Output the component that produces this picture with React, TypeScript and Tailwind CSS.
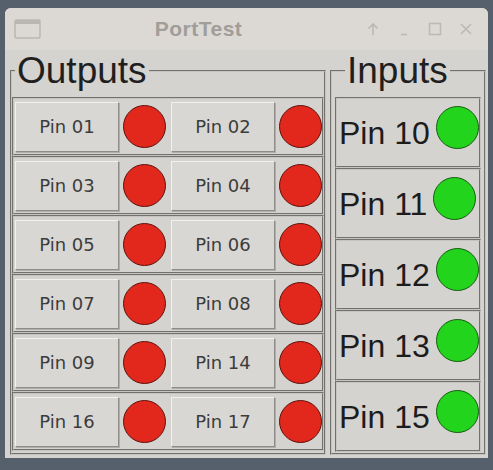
const outputRows = [
  ["01", "02"],
  ["03", "04"],
  ["05", "06"],
  ["07", "08"],
  ["09", "14"],
  ["16", "17"],
];

const inputPins = ["10", "11", "12", "13", "15"];

const Led = ({ on }: { on: boolean }) => (
  <div
    className={
      on
        ? "w-[43px] h-[43px] shrink-0 rounded-full bg-[#22d41c] border border-[#155c12]"
        : "w-[43px] h-[43px] shrink-0 rounded-full bg-[#e2271c] border border-[#5e120c]"
    }
  />
);

const PinButton = ({ label }: { label: string }) => (
  <button
    type="button"
    className="w-[104px] h-[50px] shrink-0 bg-[#d9d7d3] border border-t-[#f3f1ed] border-l-[#f3f1ed] border-r-[#8f8d89] border-b-[#8f8d89] shadow-[1px_1px_0_#b0aeaa] text-[18px] text-[#3c3c3c] font-['DejaVu_Sans',sans-serif]"
  >
    {label}
  </button>
);

const TitleBar = () => (
  <div className="h-[42px] flex items-center pl-[9px] pr-[15px] bg-[#dcd9d5] rounded-t-[6px]">
    <svg width="27" height="20" viewBox="0 0 27 20" className="shrink-0">
      <rect x="1" y="1" width="25" height="18" rx="1.5" fill="none" stroke="#bab6b2" strokeWidth="1.5" />
      <rect x="1" y="1" width="25" height="4" fill="#bab6b2" />
    </svg>
    <div className="flex-1 text-center pr-[10px] text-[21px] font-bold text-[#a19d99] font-['Liberation_Sans',sans-serif] tracking-[0.5px]">
      PortTest
    </div>
    <div className="flex items-center gap-[17px]">
      <svg width="14" height="14" viewBox="0 0 14 14">
        <path d="M7 13V2M2.5 6.5L7 2l4.5 4.5" fill="none" stroke="#bcb8b4" strokeWidth="1.6" />
      </svg>
      <svg width="14" height="14" viewBox="0 0 14 14">
        <path d="M4 12.5h6" fill="none" stroke="#bcb8b4" strokeWidth="1.6" />
      </svg>
      <svg width="14" height="14" viewBox="0 0 14 14">
        <rect x="1.5" y="1.5" width="11" height="11" fill="none" stroke="#bcb8b4" strokeWidth="1.5" />
      </svg>
      <svg width="14" height="14" viewBox="0 0 14 14">
        <path d="M2 2l10 10M12 2L2 12" fill="none" stroke="#bcb8b4" strokeWidth="1.6" />
      </svg>
    </div>
  </div>
);

export default function App() {
  return (
    <div className="w-[493px] h-[470px] bg-[#56606c] pl-[5px] pt-[8px] overflow-hidden font-['Liberation_Sans',sans-serif]">
      <div className="w-[483px] h-[450px] bg-[#d5d3cf] rounded-t-[6px] flex flex-col">
        <TitleBar />
        <div className="flex gap-[4px] px-[5px]">
          <fieldset className="w-[318px] border-2 [border-style:groove] border-[#c6c4c0] px-0 pb-[1px]">
            <legend className="ml-[3px] px-[2px] text-[37px] leading-[42px] text-[#1f1f1f]">
              Outputs
            </legend>
            <div className="flex flex-col mt-[5px]">
              {outputRows.map(([a, b]) => (
                <div
                  key={a}
                  className="h-[59px] flex items-center pl-[1px] border-2 [border-style:groove] border-[#c6c4c0]"
                >
                  <PinButton label={`Pin ${a}`} />
                  <div className="ml-[4px]">
                    <Led on={false} />
                  </div>
                  <div className="ml-[5px]">
                    <PinButton label={`Pin ${b}`} />
                  </div>
                  <div className="ml-[4px]">
                    <Led on={false} />
                  </div>
                </div>
              ))}
            </div>
          </fieldset>
          <fieldset className="w-[156px] border-2 [border-style:groove] border-[#c6c4c0] px-[3px] pb-[1px]">
            <legend className="ml-[10px] px-[2px] text-[37px] leading-[42px] text-[#1f1f1f]">
              Inputs
            </legend>
            <div className="flex flex-col mt-[5px]">
              {inputPins.map((p) => (
                <div
                  key={p}
                  className="h-[71px] flex items-center pl-[2px] border-2 [border-style:groove] border-[#c6c4c0]"
                >
                  <span className="text-[32px] leading-none text-[#1c1c1c] whitespace-nowrap">
                    Pin {p}
                  </span>
                  <div className="ml-[6px] mb-[10px]">
                    <Led on={true} />
                  </div>
                </div>
              ))}
            </div>
          </fieldset>
        </div>
      </div>
    </div>
  );
}
